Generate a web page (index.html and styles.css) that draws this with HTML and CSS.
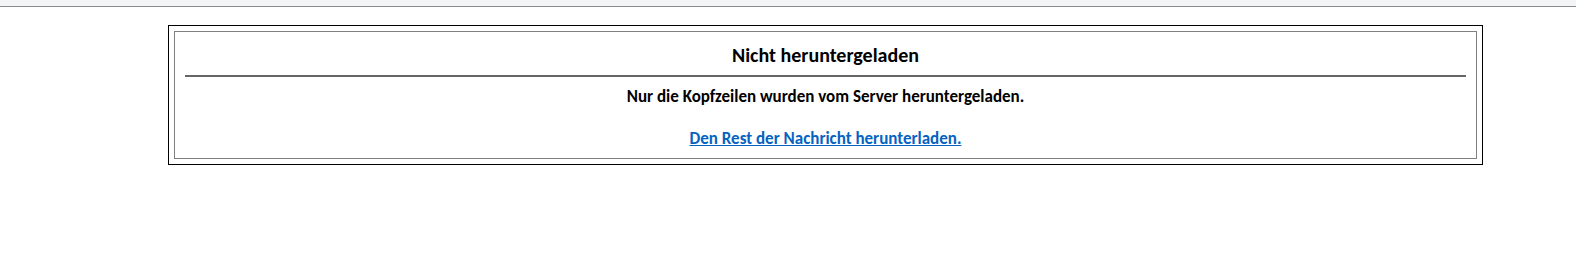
FILE: index.html
```html
<!DOCTYPE html>
<html lang="de">
<head>
    <meta charset="UTF-8">
    <meta name="viewport" content="width=device-width, initial-scale=1.0">
    <title>Nicht heruntergeladen</title>
    <link rel="stylesheet" href="styles.css">
</head>
<body>

    <div class="toolbar"></div>

    <div class="notice-outer">
        <div class="notice-inner">
            <h2 class="notice-title">Nicht heruntergeladen</h2>
            <hr class="notice-rule">
            <p class="notice-text">Nur die Kopfzeilen wurden vom Server heruntergeladen.</p>
            <p class="notice-link"><a href="#">Den Rest der Nachricht herunterladen.</a></p>
        </div>
    </div>

</body>
</html>
```

FILE: styles.css
```css
body {
    margin: 0;
    background-color: #fff;
    font-family: Calibri, Carlito, "Open Sans", sans-serif;
    color: #000;
}

.toolbar {
    height: 6px;
    background-color: #f3f4f6; /* light grey strip at the top */
    border-bottom: 1px solid #8a8a8a;
}

.notice-outer {
    margin: 18px 0 0 168px;
    width: 1303px;
    padding: 5px;
    border: 1px solid #000;
}

.notice-inner {
    border: 1px solid #808080;
    padding: 11px 10px 0;
    height: 115px;
    text-align: center;
}

.notice-title {
    margin: 0;
    font-size: 20px;
    line-height: 24px;
    font-weight: bold;
}

.notice-rule {
    margin: 8px 0 0;
    height: 2px;
    border: none;
    background-color: #666;
}

.notice-text {
    margin: 10px 0 0;
    font-size: 17px;
    line-height: 20px;
    font-weight: bold;
}

.notice-link {
    margin: 22px 0 0;
    font-size: 17px;
    line-height: 20px;
    font-weight: bold;
}

.notice-link a {
    color: #0563c1; /* link blue */
    text-decoration: underline;
}
```
